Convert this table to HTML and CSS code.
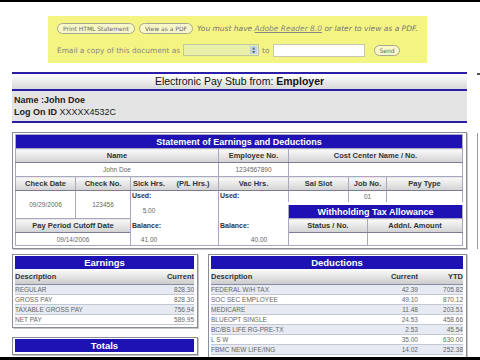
FILE: index.html
```html
<!DOCTYPE html>
<html lang="en">
<head>
    <meta charset="UTF-8">
    <meta name="viewport" content="width=device-width, initial-scale=1.0">
    <title>Electronic Pay Stub</title>
    <link rel="stylesheet" href="styles.css">
</head>

<body>
    <div class="letterbox letterbox-top"></div>

    <!-- print / email bar -->
    <div class="toolbar">
        <div class="toolbar-row">
            <button class="pill">Print HTML Statement</button>
            <button class="pill">View as a PDF</button>
            <span class="note">You must have <a href="#">Adobe Reader 8.0</a> or later to view as a PDF.</span>
        </div>
        <div class="toolbar-row">
            <span class="label">Email a copy of this document as</span>
            <span class="select"><span class="select-arrows">&#9650;<br>&#9660;</span></span>
            <span class="label label-to">to</span>
            <input class="email" type="text">
            <button class="pill pill-send">Send</button>
        </div>
    </div>

    <div class="page">
        <div class="stub">
            <div class="stub-header">
                <div class="stub-title">Electronic Pay Stub from: <b>Employer</b></div>
                <div class="stub-who">
                    <div><b>Name :John Doe</b></div>
                    <div><b>Log On ID</b> XXXXX4532C</div>
                </div>
            </div>

            <div class="box statement">
                <table class="grid">
                    <colgroup>
                        <col style="width:60px"><col style="width:55px"><col style="width:88px"><col style="width:70px">
                        <col style="width:60px"><col style="width:19px"><col style="width:19px"><col style="width:76px">
                    </colgroup>
                    <tr class="r-blue"><td colspan="8" class="blue">Statement of Earnings and Deductions</td></tr>
                    <tr class="r-head">
                        <th colspan="3">Name</th>
                        <th>Employee No.</th>
                        <th colspan="4">Cost Center Name / No.</th>
                    </tr>
                    <tr class="r-data r-tall">
                        <td colspan="3">John Doe</td>
                        <td>1234567890</td>
                        <td colspan="4"></td>
                    </tr>
                    <tr class="r-head">
                        <th>Check Date</th>
                        <th>Check No.</th>
                        <th><span class="sick">Sick Hrs.</span><span class="pl">(P/L Hrs.)</span></th>
                        <th>Vac Hrs.</th>
                        <th>Sal Slot</th>
                        <th colspan="2">Job No.</th>
                        <th>Pay Type</th>
                    </tr>
                    <tr class="r-data">
                        <td rowspan="2">09/29/2006</td>
                        <td rowspan="2">123456</td>
                        <td rowspan="4" class="hours">
                            <div class="hours-label">Used:</div>
                            <div class="hours-val sick-val">5.00</div>
                            <div class="hours-label hours-label-2">Balance:</div>
                            <div class="hours-val hours-val-2 sick-val">41.00</div>
                        </td>
                        <td rowspan="4" class="hours">
                            <div class="hours-label">Used:</div>
                            <div class="hours-val vac-val"></div>
                            <div class="hours-label hours-label-2">Balance:</div>
                            <div class="hours-val hours-val-2 vac-val">40.00</div>
                        </td>
                        <td></td>
                        <td colspan="2">01</td>
                        <td></td>
                    </tr>
                    <tr class="r-sub">
                        <td colspan="4" class="blue blue-sub">Withholding Tax Allowance</td>
                    </tr>
                    <tr class="r-head">
                        <th colspan="2">Pay Period Cutoff Date</th>
                        <th colspan="2">Status / No.</th>
                        <th colspan="2">Addnl. Amount</th>
                    </tr>
                    <tr class="r-data">
                        <td colspan="2">09/14/2006</td>
                        <td colspan="2"></td>
                        <td colspan="2"></td>
                    </tr>
                </table>
            </div>

            <div class="lower">
                <div class="lower-left">
                    <div class="box earnings">
                        <table class="list">
                            <tr class="r-blue"><td colspan="2" class="blue">Earnings</td></tr>
                            <tr class="r-colhead"><th class="l">Description</th><th class="r">Current</th></tr>
                            <tr class="odd"><td>REGULAR</td><td class="r">828.30</td></tr>
                            <tr><td>GROSS PAY</td><td class="r">828.30</td></tr>
                            <tr class="odd"><td>TAXABLE GROSS PAY</td><td class="r">756.94</td></tr>
                            <tr><td>NET PAY</td><td class="r">589.95</td></tr>
                        </table>
                    </div>
                    <div class="box totals">
                        <table class="list">
                            <tr class="r-blue"><td class="blue">Totals</td></tr>
                        </table>
                    </div>
                </div>

                <div class="box deductions">
                    <table class="list">
                        <colgroup><col><col style="width:60px"><col style="width:45px"></colgroup>
                        <tr class="r-blue"><td colspan="3" class="blue">Deductions</td></tr>
                        <tr class="r-colhead"><th class="l">Description</th><th class="r">Current</th><th class="r">YTD</th></tr>
                        <tr class="odd"><td>FEDERAL W/H TAX</td><td class="r">42.39</td><td class="r">705.82</td></tr>
                        <tr><td>SOC SEC EMPLOYEE</td><td class="r">49.10</td><td class="r">870.12</td></tr>
                        <tr class="odd"><td>MEDICARE</td><td class="r">11.48</td><td class="r">203.51</td></tr>
                        <tr><td>BLUEOPT SINGLE</td><td class="r">24.53</td><td class="r">458.66</td></tr>
                        <tr class="odd"><td>BC/BS LIFE RG-PRE-TX</td><td class="r">2.53</td><td class="r">45.54</td></tr>
                        <tr><td>L S W</td><td class="r">35.00</td><td class="r">630.00</td></tr>
                        <tr class="odd"><td>FBMC NEW LIFE/ING</td><td class="r">14.02</td><td class="r">252.38</td></tr>
                    </table>
                </div>
            </div>
        </div>

        <!-- next stub, cut off by the window -->
        <div class="next-stub">
            <div class="next-line"></div>
            <div class="next-box"></div>
        </div>
    </div>

    <div class="letterbox letterbox-bottom"></div>
</body>
</html>
```

FILE: styles.css
```css
body {
    margin: 0;
    width: 480px;
    height: 360px;
    overflow: hidden;
    position: relative;
    font-family: 'Liberation Sans', Arial, sans-serif;
    background-color: #ffffff;
    color: #222;
}

.letterbox {
    position: absolute;
    left: 0;
    right: 0;
    background-color: #000;
    z-index: 5;
}

.letterbox-top {
    top: 0;
    height: 2px;
}

.letterbox-bottom {
    bottom: 0;
    height: 3px;
}

/* print / email bar */
.toolbar {
    margin: 16px 0 0 48px;
    width: 379px;
    height: 47px;
    box-sizing: border-box;
    padding: 6px 0 0 9px;
    background-color: #f4f482;
    font-family: 'DejaVu Sans', Verdana, sans-serif;
    color: #777;
}

.toolbar-row {
    display: flex;
    align-items: center;
    height: 12px;
}

.toolbar-row + .toolbar-row {
    margin-top: 10px;
}

.pill {
    height: 11px;
    padding: 0 5px;
    margin: 0 4px 0 0;
    font-family: 'DejaVu Sans', Verdana, sans-serif;
    font-size: 6px;
    color: #666;
    background-color: #f7f7c8;
    border: 1px solid #a8a890;
    border-radius: 6px;
}

.note {
    font-size: 7.5px;
    font-style: italic;
    color: #777;
}

.note a {
    color: #888;
}

.label {
    font-size: 7.4px;
    color: #888;
}

.select {
    position: relative;
    width: 74px;
    height: 10px;
    margin-left: 3px;
    background-color: #e8f0a8;
    border: 1px solid #c4c8a0;
}

.select-arrows {
    position: absolute;
    right: 1px;
    top: 1px;
    width: 7px;
    height: 8px;
    background-color: #bcd4e8;
    font-size: 3px;
    line-height: 4px;
    text-align: center;
    color: #445;
}

.label-to {
    margin: 0 4px 0 3px;
}

.email {
    width: 92px;
    height: 13px;
    box-sizing: border-box;
    padding: 0;
    border: 1px solid #c8c8b0;
    background-color: #ffffff;
}

.pill-send {
    margin-left: 9px;
    padding: 0 4px;
}

/* stub */
.page {
    display: flex;
    margin-top: 9px;
    padding-left: 12px;
}

.stub {
    width: 455px;
}

.stub-header {
    border-top: 2px solid #2a1ea8;
    border-bottom: 2px solid #2a1ea8;
    background-color: #e4e4e4;
}

.stub-title {
    height: 15px;
    line-height: 15px;
    text-align: center;
    font-size: 10.5px;
    color: #111;
    background: linear-gradient(#ffffff, #d8d8d8);
    border-bottom: 2px solid #2a1ea8;
}

.stub-who {
    height: 30px;
    padding: 3px 0 0 2px;
    box-sizing: border-box;
    font-size: 9px;
    line-height: 12px;
    color: #222;
}

.box {
    border: 1px solid #8c8c98;
    padding: 1px 3px 2px 2px;
    box-shadow: 1px 1px 0 #c8c8c8;
}

.statement {
    margin-top: 9px;
}

table {
    border-collapse: collapse;
    table-layout: fixed;
    width: 100%;
}

td, th {
    padding: 0;
    text-align: center;
    overflow: hidden;
    white-space: nowrap;
}

.blue {
    background-color: #1e12b5;
    color: #ffffff;
    font-weight: bold;
    font-size: 9px;
}

.grid tr.r-blue { height: 14px; }
.grid tr.r-head { height: 14px; }
.grid tr.r-data { height: 13px; }
.grid tr.r-tall { height: 14px; }
.grid tr.r-sub { height: 15px; }

.grid th {
    font-size: 7.5px;
    font-weight: bold;
    color: #333;
    background: linear-gradient(#fafafa, #d2d2d2);
    border: 1px solid #a8a8c0;
    border-bottom-color: #7c7c98;
}

.grid td {
    font-size: 6.5px;
    color: #666;
    background-color: #ffffff;
    border: 1px solid #a8a8c0;
}

.grid td.blue {
    color: #ffffff;
    font-size: 9px;
    background-color: #1e12b5;
}

.blue-sub {
    border-top: 3px solid #ffffff !important;
}

.sick {
    display: inline-block;
    width: 36px;
}

.pl {
    display: inline-block;
    width: 52px;
}

.grid td.hours {
    text-align: left;
    vertical-align: top;
}

.hours-label {
    height: 13px;
    line-height: 10px;
    padding-left: 1px;
    font-size: 7px;
    font-weight: bold;
    color: #333;
}

.hours-label-2 {
    line-height: 16px;
}

.hours-val {
    height: 14px;
    line-height: 14px;
}

.hours-val-2 {
    height: 13px;
    line-height: 18px;
}

.sick-val {
    width: 36px;
    text-align: center;
}

.vac-val {
    width: 80px;
    text-align: center;
}

/* earnings / deductions */
.lower {
    display: flex;
    justify-content: space-between;
    align-items: flex-start;
    margin-top: 5px;
}

.lower-left {
    width: 186px;
}

.earnings, .totals {
    box-sizing: border-box;
    width: 186px;
}

.totals {
    margin-top: 9px;
}

.deductions {
    box-sizing: border-box;
    width: 259px;
}

.list .blue {
    height: 13px;
}

.list tr.r-colhead {
    height: 15px;
}

.list th {
    font-size: 7.5px;
    font-weight: bold;
    color: #333;
    background: linear-gradient(#fdfdfd, #cccccc);
    border-bottom: 1px solid #8a8aa0;
}

.list td {
    height: 9px;
    font-size: 6.5px;
    line-height: 9px;
    color: #666;
    text-align: left;
    border-bottom: 1px solid #c4c8d4;
}

.list tr.odd td {
    background-color: #e6ebf3;
}

.list .l {
    text-align: left;
}

.list .r {
    text-align: right;
}

.list td.blue {
    text-align: center;
    color: #ffffff;
    font-size: 9.5px;
    line-height: 13px;
    border-bottom: none;
}

/* next stub */
.next-stub {
    margin-left: 10px;
    width: 10px;
}

.next-line {
    height: 2px;
    background-color: #555;
    margin-top: 1px;
}

.next-box {
    margin-top: 58px;
    height: 116px;
    border-left: 1px solid #999;
}
```
